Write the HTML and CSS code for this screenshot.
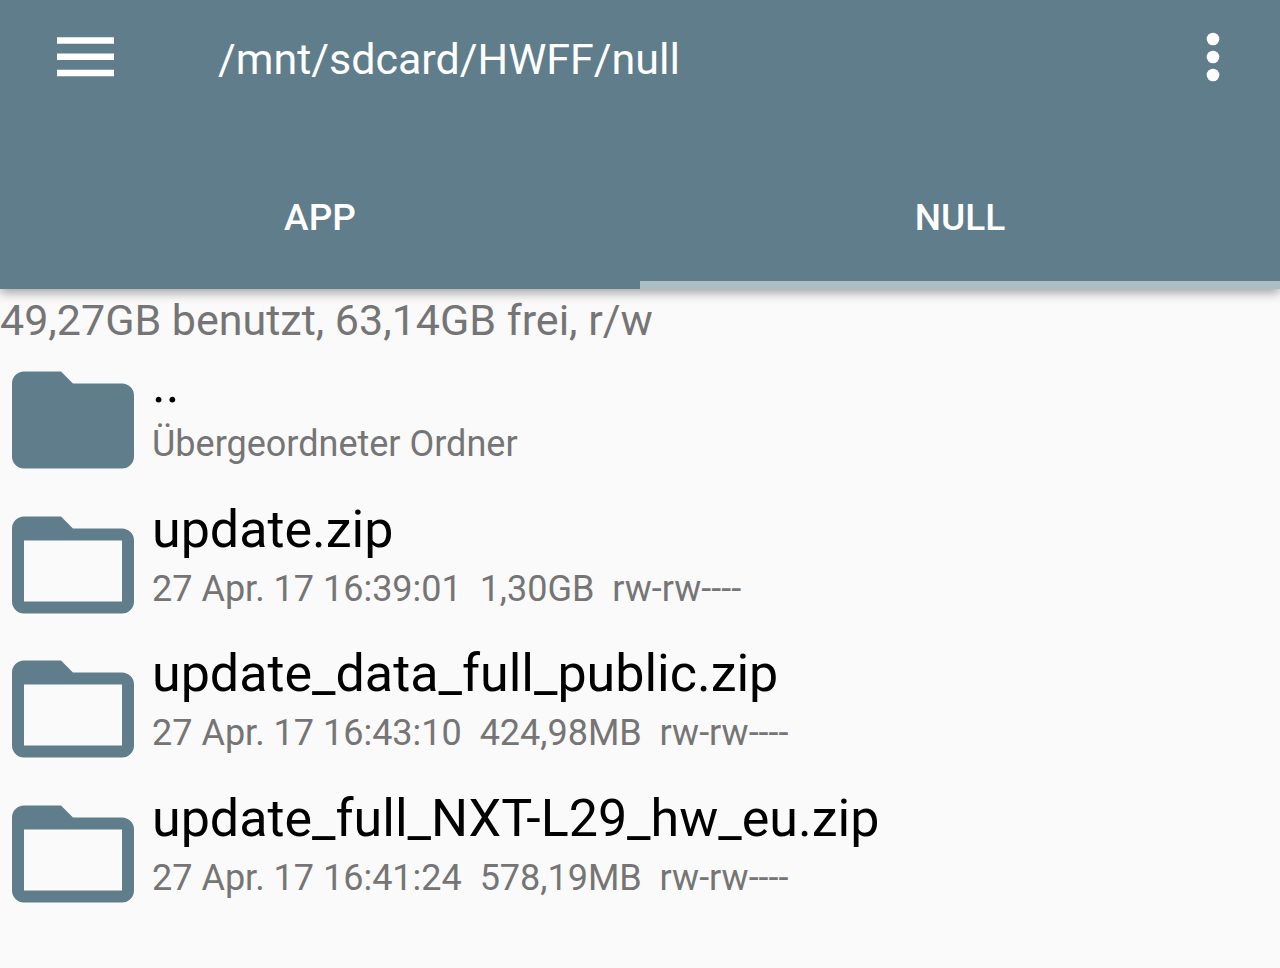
FILE: index.html
```html
<!DOCTYPE html>
<html lang="de">
<head>
<meta charset="utf-8">
<meta name="viewport" content="width=device-width, initial-scale=1">
<title>/mnt/sdcard/HWFF/null</title>
<link rel="stylesheet" href="styles.css">
</head>
<body>
<svg class="symbols" aria-hidden="true">
  <symbol id="folder" viewBox="0 0 122 98"><path d="M12 0.5H49L61 12.5H110A12 12 0 0 1 122 24.500V85.500A12 12 0 0 1 110 97.500H12A12 12 0 0 1 0 85.500V12.500A12 12 0 0 1 12 0.500Z"/></symbol>
  <symbol id="folder-open" viewBox="0 0 122 98"><path fill-rule="evenodd" d="M12 0.5H49L61 12.500H110A12 12 0 0 1 122 24.500V85.500A12 12 0 0 1 110 97.500H12A12 12 0 0 1 0 85.500V12.500A12 12 0 0 1 12 0.500ZM12 24.500V85.500H110V24.500Z"/></symbol>
</svg>
<header class="header">
  <div class="toolbar">
    <button class="icon-button" type="button" aria-label="Menü">
      <svg class="menu-icon" viewBox="0 0 57 40"><path d="M0 0.3H57V6.800H0ZM0 16.500H57V23H0ZM0 32.700H57V39.200H0Z"/></svg>
    </button>
    <h1 class="path">/mnt/sdcard/HWFF/null</h1>
    <button class="icon-button" type="button" aria-label="Weitere Optionen">
      <svg class="more-icon" viewBox="0 0 14 50"><circle cx="7" cy="7" r="6.300"/><circle cx="7" cy="25" r="6.300"/><circle cx="7" cy="43" r="6.300"/></svg>
    </button>
  </div>
  <nav class="tabs">
    <button class="tab" type="button">APP</button>
    <button class="tab tab-active" type="button">NULL</button>
  </nav>
</header>
<main>
  <p class="storage">49,27GB benutzt, 63,14GB frei, r/w</p>
  <ul class="files">
    <li class="file">
      <svg class="folder" aria-hidden="true"><use href="#folder"/></svg>
      <div class="info"><span class="name">..</span><span class="meta">Übergeordneter Ordner</span></div>
    </li>
    <li class="file">
      <svg class="folder" aria-hidden="true"><use href="#folder-open"/></svg>
      <div class="info"><span class="name">update.zip</span><span class="meta">27 Apr. 17 16:39:01  1,30GB  rw-rw----</span></div>
    </li>
    <li class="file">
      <svg class="folder" aria-hidden="true"><use href="#folder-open"/></svg>
      <div class="info"><span class="name">update_data_full_public.zip</span><span class="meta">27 Apr. 17 16:43:10  424,98MB  rw-rw----</span></div>
    </li>
    <li class="file">
      <svg class="folder" aria-hidden="true"><use href="#folder-open"/></svg>
      <div class="info"><span class="name">update_full_NXT-L29_hw_eu.zip</span><span class="meta">27 Apr. 17 16:41:24  578,19MB  rw-rw----</span></div>
    </li>
  </ul>
</main>
</body>
</html>
```
FILE: styles.css
```css
* { box-sizing: border-box; }
body {
  margin: 0;
  background: #fafafa;
  color: #000;
  font-family: Roboto, sans-serif;
}
.symbols { position: absolute; width: 0; height: 0; }
.header {
  background: #607d8b;
  color: #fff;
  box-shadow: 0 4px 10px rgba(0, 0, 0, 0.35);
}
.toolbar {
  display: flex;
  align-items: center;
  height: 114px;
  padding: 0 56px 0 53px;
}
.icon-button {
  display: flex;
  padding: 4px;
  border: 0;
  background: none;
}
.menu-icon { width: 57px; height: 40px; fill: #fff; }
.more-icon { width: 14px; height: 50px; fill: #fff; }
.path {
  flex: 1;
  margin: 0;
  padding: 4px 0 0 100px;
  font-size: 43px;
  font-weight: 400;
  line-height: 48px;
}
.tabs { display: flex; }
.tab {
  flex: 1;
  height: 175px;
  padding: 48px 0 8px;
  border: 0;
  border-bottom: 8px solid transparent;
  background: none;
  color: #fff;
  font: 500 37px/44px Roboto, sans-serif;
}
.tab-active { border-bottom-color: #abbec4; }
.storage {
  margin: 0;
  padding: 7px 0 0;
  color: #757575;
  font-size: 43px;
  line-height: 48px;
}
.files {
  margin: 0;
  padding: 4px 0 0;
  list-style: none;
}
.file {
  display: flex;
  align-items: center;
  gap: 18px;
  min-height: 144px;
  padding-left: 12px;
}
.file:nth-child(even) { min-height: 145px; }
.folder { flex: none; width: 122px; height: 98px; fill: #607d8b; }
.info {
  display: flex;
  flex-direction: column;
  gap: 3px;
  padding-bottom: 19px;
}
.name { font-size: 52px; line-height: 64px; }
.meta {
  color: #757575;
  font-size: 36px;
  line-height: 48px;
  white-space: pre;
}
```
